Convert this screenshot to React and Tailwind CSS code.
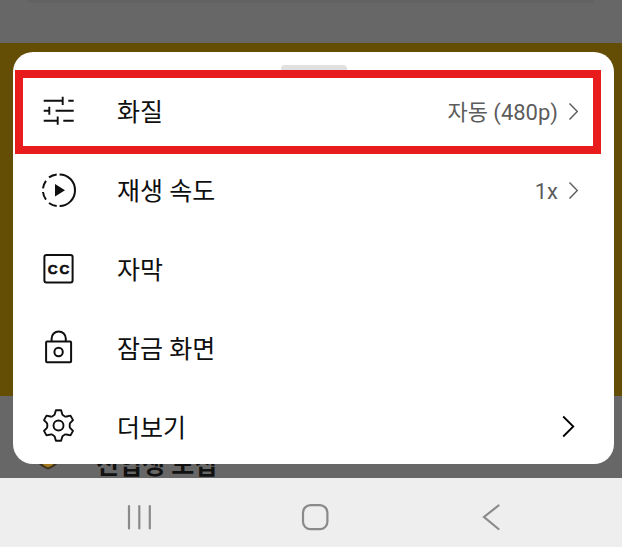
import React from "react";

const TuneIcon = () => (
  <svg viewBox="0 0 36 36" className="size-9 shrink-0" fill="none" stroke="currentColor" strokeWidth="1.9" aria-hidden="true">
    <path d="M2.7 7.7H21.5M21.7 3.7V12M27.3 7.7H32.7" />
    <path d="M2.7 17.7H8M8.3 13.7V21.8M14.6 17.7H32.7" />
    <path d="M2.7 27.7H16.5M16.7 23.6V31.8M22.3 27.7H32.7" />
  </svg>
);

const SpeedIcon = () => (
  <svg viewBox="0 0 36 36" className="size-9 shrink-0" fill="none" stroke="currentColor" strokeWidth="2" aria-hidden="true">
    <path d="M18.6 2.4A15.4 15.8 0 0 1 18.6 34" />
    <path d="M8 5.4A15.7 15.7 0 0 1 15.7 2.4M2 16.4A15.7 15.7 0 0 1 5 8.8M2 20A15.7 15.7 0 0 0 5 27.6M8 31A15.7 15.7 0 0 0 15.7 34" />
    <path d="M14 12V24.4L24 18.2Z" fill="currentColor" stroke="none" />
  </svg>
);

const CaptionIcon = () => (
  <svg viewBox="0 0 36 36" className="size-9 shrink-0" fill="none" stroke="currentColor" strokeWidth="2" aria-hidden="true">
    <rect x="3.4" y="4" width="28.2" height="27.6" rx="2" />
    <g
      fill="currentColor"
      strokeWidth="0.6"
      fontFamily="'Liberation Sans', sans-serif"
      fontWeight="700"
      fontSize="13.5"
      textAnchor="middle"
    >
      <text x="11.6" y="22.6">C</text>
      <text x="23.4" y="22.6">C</text>
    </g>
  </svg>
);

const LockIcon = () => (
  <svg viewBox="0 0 36 36" className="size-9 shrink-0" fill="none" stroke="currentColor" strokeWidth="2" aria-hidden="true">
    <rect x="5.1" y="11.5" width="25" height="20.8" rx="1" />
    <path d="M10.6 11.5V8.5a7.1 7.1 0 0 1 14.2 0V11.5" />
    <circle cx="17.6" cy="22" r="4.2" />
  </svg>
);

const GearIcon = () => (
  <svg viewBox="0 0 36 36" className="size-9 shrink-0" fill="none" stroke="currentColor" strokeWidth="1.9" strokeLinejoin="round" aria-hidden="true">
    <path d="M14.9 1.2H20.1L21.2 5Q21.5 6 22.4 6.5L23.7 7.3Q24.6 7.8 25.6 7.5L29.5 6.6L32 11.1L29.3 13.9Q28.6 14.7 28.7 15.6V17.4Q28.6 18.3 29.3 19.1L32 21.9L29.5 26.4L25.6 25.5Q24.6 25.2 23.7 25.7L22.4 26.5Q21.5 27 21.2 28L20.1 31.8H14.9L13.8 28Q13.5 27 12.6 26.5L11.3 25.7Q10.4 25.2 9.4 25.5L5.5 26.4L3 21.9L5.7 19.1Q6.4 18.3 6.3 17.4V15.6Q6.4 14.7 5.7 13.9L3 11.1L5.5 6.6L9.4 7.5Q10.4 7.8 11.3 7.3L12.6 6.5Q13.5 6 13.8 5Z" />
    <circle cx="17.5" cy="16.5" r="5" />
  </svg>
);

const SmallChevron = () => (
  <svg viewBox="0 0 16 20" className="h-5 w-4" fill="none" stroke="currentColor" strokeWidth="1.4" aria-hidden="true">
    <path d="M7.5 2.5L15.3 10.5L7.5 18.5" />
  </svg>
);

const LargeChevron = () => (
  <svg viewBox="0 0 16 24" className="h-6 w-4 text-black" fill="none" stroke="currentColor" strokeWidth="1.8" aria-hidden="true">
    <path d="M1.2 1.5L11.3 11.5L1.2 21.5" />
  </svg>
);

const menuItems = [
  { label: "화질", icon: TuneIcon, value: "자동 (480p)", chevron: SmallChevron },
  { label: "재생 속도", icon: SpeedIcon, value: "1x", chevron: SmallChevron },
  { label: "자막", icon: CaptionIcon },
  { label: "잠금 화면", icon: LockIcon },
  { label: "더보기", icon: GearIcon, chevron: LargeChevron },
];

const MenuRow = ({ label, icon: Icon, value, chevron: Chevron }) => (
  <button type="button" className="flex h-16 w-full items-center gap-10 pr-9 pl-7 text-left text-[#0f0f0f]">
    <Icon />
    <span className="flex-1 pt-1 text-[25px] leading-8">{label}</span>
    <span className="flex items-center gap-1 text-[22px] leading-8 text-[#5c5c5c]">
      {value && <span className="pt-1">{value}</span>}
      {Chevron && <Chevron />}
    </span>
  </button>
);

const SettingsSheet = () => (
  <section className="absolute top-[52px] right-2 left-[13px] rounded-[20px] bg-white pt-[13px] pb-[5px]">
    <div className="mx-auto mb-[6px] h-2 w-[66px] rounded-t bg-[#e0e0e0]" />
    <div className="flex flex-col gap-[15px]">
      {menuItems.map((item) => (
        <MenuRow key={item.label} {...item} />
      ))}
    </div>
    {/* highlight around the first row */}
    <div className="pointer-events-none absolute top-[18px] right-[13px] left-[2px] h-[84px] border-8 border-[#e81c1c]" />
  </section>
);

const NavBar = () => (
  <nav className="grid h-[69px] grid-cols-3 items-center justify-items-center bg-[#eeeeee] pt-[9px] pr-[43px] pl-[51px] text-[#8a8a8a]">
    <button type="button" aria-label="최근 앱">
      <svg viewBox="0 0 28 28" className="size-7" fill="none" stroke="currentColor" strokeWidth="2.2" strokeLinecap="round">
        <path d="M4 3V25.5M14.3 3V25.5M24.8 3V25.5" />
      </svg>
    </button>
    <button type="button" aria-label="홈">
      <svg viewBox="0 0 28 28" className="size-7" fill="none" stroke="currentColor" strokeWidth="2.2">
        <rect x="2" y="2.2" width="24.4" height="24" rx="7.5" />
      </svg>
    </button>
    <button type="button" aria-label="뒤로">
      <svg viewBox="0 0 28 28" className="size-7" fill="none" stroke="currentColor" strokeWidth="2.2" strokeLinecap="round">
        <path d="M21.5 2.5L7 14L21.5 26" />
      </svg>
    </button>
  </nav>
);

const App = () => (
  <div className="font-[Roboto,'Noto_Sans_CJK_KR',sans-serif]">
    <main className="relative">
      <div className="h-[43px] bg-[#676767] px-7">
        <div className="h-[3px] rounded-b bg-[#626262]" />
      </div>
      <div className="h-[353px] bg-[#644e05]" />
      <div className="flex h-[82px] items-end gap-9 bg-[#676767] pl-9">
        <svg viewBox="0 0 24 24" className="mb-2 size-6" aria-hidden="true">
          <path d="M1 4H23V16Q19 21 12 23.5Q5 21 1 16Z" fill="#3a3020" />
          <path d="M5 4H19V17Q16 20 12 21.5Q8 20 5 17Z" fill="#a87a20" />
        </svg>
        <p className="text-[25px] leading-6 font-bold text-[#111111]">신입생 모집</p>
      </div>
      <SettingsSheet />
    </main>
    <NavBar />
  </div>
);

export default App;
